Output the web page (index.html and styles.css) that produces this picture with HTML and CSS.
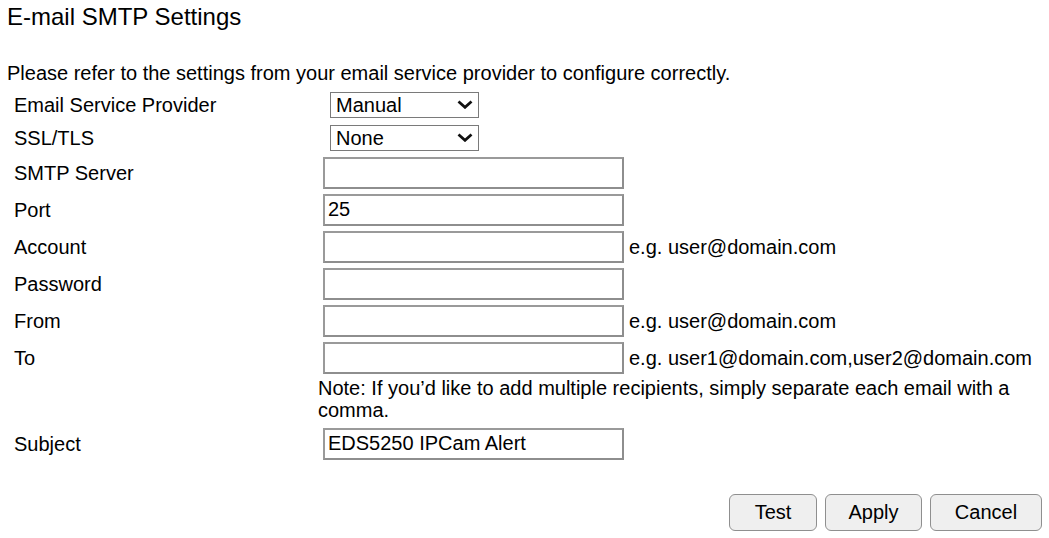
FILE: index.html
```html
<!DOCTYPE html>
<html lang="en">
<head>
  <meta charset="UTF-8">
  <title>E-mail SMTP Settings</title>
  <link rel="stylesheet" href="styles.css">
</head>
<body>

  <div class="page">
    <h1>E-mail SMTP Settings</h1>
    <p class="intro">Please refer to the settings from your email service provider to configure correctly.</p>

    <form class="smtp-form" action="/smtp" method="post">
      <div class="row select-row">
        <label for="provider">Email Service Provider</label>
        <select id="provider" name="provider">
          <option>Manual</option>
          <option>Gmail</option>
          <option>Yahoo</option>
        </select>
        <span></span>
      </div>

      <div class="row select-row">
        <label for="ssl">SSL/TLS</label>
        <select id="ssl" name="ssl">
          <option>None</option>
          <option>SSL</option>
          <option>TLS</option>
        </select>
        <span></span>
      </div>

      <div class="row">
        <label for="server">SMTP Server</label>
        <input type="text" id="server" name="server">
        <span></span>
      </div>

      <div class="row">
        <label for="port">Port</label>
        <input type="text" id="port" name="port" value="25">
        <span></span>
      </div>

      <div class="row">
        <label for="account">Account</label>
        <input type="text" id="account" name="account">
        <span class="hint">e.g. user@domain.com</span>
      </div>

      <div class="row">
        <label for="password">Password</label>
        <input type="password" id="password" name="password">
        <span></span>
      </div>

      <div class="row">
        <label for="from">From</label>
        <input type="text" id="from" name="from">
        <span class="hint">e.g. user@domain.com</span>
      </div>

      <div class="row">
        <label for="to">To</label>
        <input type="text" id="to" name="to">
        <span class="hint">e.g. user1@domain.com,user2@domain.com</span>
      </div>

      <div class="row note-row">
        <span></span>
        <p class="note">Note: If you’d like to add multiple recipients, simply separate each email with a comma.</p>
      </div>

      <div class="row">
        <label for="subject">Subject</label>
        <input type="text" id="subject" name="subject" value="EDS5250 IPCam Alert">
        <span></span>
      </div>

      <div class="actions">
        <button type="button" class="btn-test">Test</button>
        <button type="submit" class="btn-apply">Apply</button>
        <button type="reset" class="btn-cancel">Cancel</button>
      </div>
    </form>
  </div>

</body>
</html>
```

FILE: styles.css
```css
body {
  margin: 0;
  background: #fff;
  color: #000;
  font-family: "Liberation Sans", Arial, sans-serif;
  font-size: 20px;
}

.page {
  padding: 0 7px;
}

h1 {
  margin: 0;
  font-size: 24px;
  font-weight: normal;
  line-height: 34px;
}

.intro {
  margin: 28px 0 0;
  line-height: 22px;
}

.smtp-form {
  margin: 4px 0 0 7px;
}

.row {
  display: grid;
  grid-template-columns: 304px 306px 1fr;
  align-items: center;
  height: 37px;
}

.select-row {
  height: 33px;
}

.row label {
  line-height: 22px;
}

.row select {
  margin-left: 12px;
  width: 149px;
  height: 26px;
  padding: 0 0 0 5px;
  border: 1px solid #7a7a7a;
  border-radius: 0;
  background: #fff url("data:image/svg+xml,%3Csvg xmlns='http://www.w3.org/2000/svg' width='16' height='9' viewBox='0 0 16 9'%3E%3Cpath d='M1.5 1.5 L8 7.3 L14.5 1.5' fill='none' stroke='%23111' stroke-width='2.8'/%3E%3C/svg%3E") no-repeat right 5px center;
  font-family: inherit;
  font-size: 20px;
  color: #000;
  appearance: none;
  -webkit-appearance: none;
}

.row input {
  margin-left: 5px;
  width: 301px;
  height: 32px;
  box-sizing: border-box;
  padding: 0 3px;
  border: 2px solid #8e8e8e;
  border-top-color: #9a9a9a;
  border-left-color: #9a9a9a;
  font-family: inherit;
  font-size: 20px;
  color: #000;
  outline: none;
}

.hint {
  padding-left: 5px;
  white-space: nowrap;
  line-height: 22px;
}

.note-row {
  height: auto;
  padding: 1px 0 4px;
}

.note {
  grid-column: 2 / 4;
  margin: 0;
  line-height: 22px;
}

.actions {
  display: flex;
  justify-content: flex-end;
  gap: 8px;
  margin-top: 32px;
}

.actions button {
  height: 37px;
  padding: 0;
  border: 1px solid #8f8f8f;
  border-radius: 6px;
  background-color: #efefef;
  color: #000;
  font-family: inherit;
  font-size: 20px;
  cursor: pointer;
}

.actions .btn-test {
  width: 88px;
}

.actions .btn-apply {
  width: 97px;
}

.actions .btn-cancel {
  width: 112px;
}

.actions button:hover {
  background-color: #e5e5e5;
}
```
